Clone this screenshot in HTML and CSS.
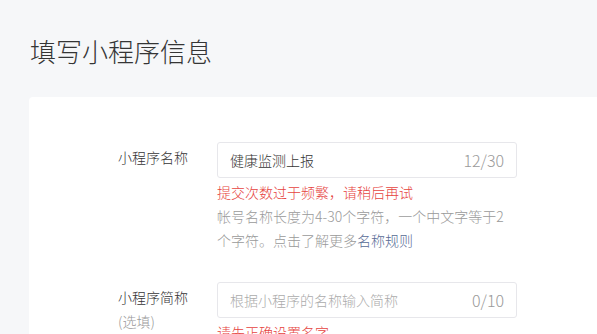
FILE: index.html
```html
<!DOCTYPE html>
<html lang="zh-CN">
<head>
    <meta charset="UTF-8">
    <meta name="viewport" content="width=device-width, initial-scale=1.0">
    <title>填写小程序信息</title>
    <link rel="stylesheet" href="styles.css">
</head>
<body>
    <div class="page-header">
        <h2 class="page-title">填写小程序信息</h2>
    </div>

    <div class="card">
        <div class="form-row">
            <div class="form-label">小程序名称</div>
            <div class="form-control">
                <div class="input-box">
                    <span class="input-value">健康监测上报</span>
                    <span class="input-count">12/30</span>
                </div>
                <div class="form-error">提交次数过于频繁，请稍后再试</div>
                <div class="form-tips">帐号名称长度为4-30个字符，一个中文字等于2个字符。点击了解更多<a class="link" href="#">名称规则</a></div>
            </div>
        </div>

        <div class="form-row">
            <div class="form-label">小程序简称<span class="label-sub">(选填)</span></div>
            <div class="form-control">
                <div class="input-box">
                    <span class="input-placeholder">根据小程序的名称输入简称</span>
                    <span class="input-count">0/10</span>
                </div>
                <div class="form-error">请先正确设置名字</div>
            </div>
        </div>
    </div>
</body>
</html>
```

FILE: styles.css
```css
body {
    margin: 0;
    background-color: #f6f7f9;
    font-family: "Noto Sans CJK SC", "Noto Sans", sans-serif;
    font-weight: 300;
    color: #353535;
    font-size: 14px;
    overflow: hidden;
}

.page-header {
    height: 97px;
    padding: 33px 0 0 30px;
    box-sizing: border-box;
}

.page-title {
    margin: 0;
    font-size: 26px;
    font-weight: 300;
    line-height: 36px;
    color: #353535;
}

.card {
    margin-left: 29px;
    background-color: #fff;
    border-top-left-radius: 4px;
    padding-top: 45px;
    min-height: 300px;
}

.form-row {
    display: grid;
    grid-template-columns: 159px 300px;
    column-gap: 29px;
    margin-bottom: 30px;
}

.form-label {
    text-align: right;
    padding-top: 3px;
    line-height: 24px;
}

.label-sub {
    display: block;
    text-align: left;
    padding-left: 89px;
    color: #9a9a9a;
}

.input-box {
    display: flex;
    justify-content: space-between;
    align-items: center;
    height: 36px;
    box-sizing: border-box;
    padding: 0 12px;
    border: 1px solid #e7e7eb;
    border-radius: 3px;
}

.input-value {
    color: #353535;
}

.input-placeholder {
    color: #ababab;
}

.input-count {
    color: #9a9a9a;
    font-size: 16px;
}

.form-error {
    margin-top: 2px;
    line-height: 24px;
    color: #e64340;
}

.form-tips {
    line-height: 24px;
    color: #9a9a9a;
}

.link {
    color: #576b95;
    text-decoration: none;
}
```
